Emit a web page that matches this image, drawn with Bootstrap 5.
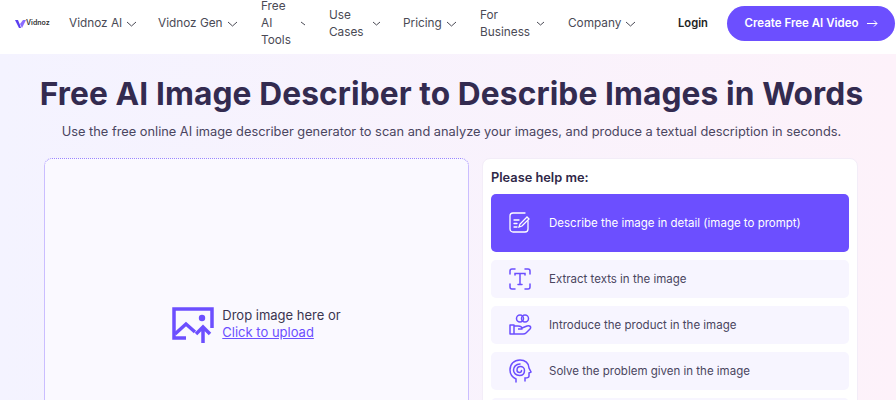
<!DOCTYPE html>
<html lang="en">
<head>
    <meta charset="UTF-8">
    <meta content="width=device-width, initial-scale=1.0" name="viewport">
    <title>AI Image Describer</title>
    <link href="https://cdn.jsdelivr.net/npm/bootstrap@5.3.0/dist/css/bootstrap.min.css" rel="stylesheet">
    <style>
        html, body { height: 400px; overflow: hidden; }
        body {
            font-family: Inter, "Liberation Sans", sans-serif;
            background: linear-gradient(90deg, #f4f3ff 0%, #fdf2fa 100%);
            color: #2f2848;
        }
        .top-bar { height: 54px; background: #fff; padding: 0 1px 7px 15px; }
        .brand-box { width: 54px; color: #6b4ffb; font-size: 7px; font-weight: 600; }
        .brand-box span { color: #333; }
        .menu-item { font-size: 11.8px; line-height: 17px; color: #4a4a55; }
        .menu-item svg { flex: none; }
        .m1 { width: 89px; }
        .m2 { width: 103px; }
        .m3 { width: 45px; }
        .m4 { width: 52px; margin-left: 23px; }
        .m5 { width: 51px; margin-left: 22px; }
        .m6 { width: 65px; margin-left: 26px; }
        .m7 { width: 69px; margin-left: 23px; }
        .login-link { font-size: 11.2px; font-weight: 600; color: #222; margin-left: 41px; }
        .video-btn {
            width: 168px; height: 35px; border-radius: 18px;
            background: #6c4fff; color: #fff; font-size: 11.5px; font-weight: 600;
        }
        .page-title { font-size: 31.7px; font-weight: 700; line-height: 40px; color: #332b50; margin: 20px 0 0; padding-left: 7px; letter-spacing: .1px; }
        .page-sub { font-size: 12.8px; line-height: 20px; color: #4a4560; margin: 8px 0 16px; padding-left: 7px; }
        .work-row { padding: 0 38px 0 44px; gap: 13px; }
        .drop-box {
            width: 425px; height: 300px; background: #faf9ff;
            border: 1px dotted #9a84ff; border-radius: 8px;
            padding-top: 148px;
        }
        .drop-text { font-size: 13px; line-height: 17px; color: #3a3550; }
        .drop-text a { color: #6c4fff; }
        .help-box {
            width: 376px; height: 300px; background: #fff;
            border: 1px solid #f3edf8; border-radius: 8px; padding: 10px 8px;
        }
        .help-title { font-size: 12.8px; font-weight: 600; line-height: 17px; margin-bottom: 8px; color: #2f2848; }
        .opt-row {
            height: 38px; margin-bottom: 8px; border-radius: 5px; background: #f7f5ff;
            color: #4a4560; font-size: 11.5px;
        }
        .opt-row.on { height: 58px; background: #6c4fff; color: #fff; margin-bottom: 8px; }
        .opt-row span { padding-top: 2px; }
        .opt-icon { width: 58px; flex: none; }
    </style>
</head>
<body>

<nav class="top-bar d-flex align-items-center">
    <div class="brand-box d-flex align-items-center">
        <svg width="11" height="10" viewBox="0 0 11 10"><path d="M0 1l3 0 2 5 1 3-2 0z" fill="#5b3ff0"/><path d="M5 5l3-4 3 0-4 8z" fill="#8a6bff"/></svg>
        <span>Vidnoz</span>
    </div>
    <div class="menu-item m1 d-flex align-items-center gap-1">Vidnoz AI
        <svg width="11" height="6" viewBox="0 0 11 6"><path d="M1 1l4.500 4 4.500-4" fill="none" stroke="#4a4a55"/></svg></div>
    <div class="menu-item m2 d-flex align-items-center gap-1">Vidnoz Gen
        <svg width="11" height="6" viewBox="0 0 11 6"><path d="M1 1l4.500 4 4.500-4" fill="none" stroke="#4a4a55"/></svg></div>
    <div class="menu-item m3 d-flex align-items-center justify-content-between">
        <span>Free<br>AI<br>Tools</span>
        <svg width="6" height="5" viewBox="0 0 6 5"><path d="M1 1l4 3" fill="none" stroke="#4a4a55"/></svg></div>
    <div class="menu-item m4 d-flex align-items-center justify-content-between">
        <span>Use<br>Cases</span>
        <svg width="9" height="5" viewBox="0 0 9 5"><path d="M1 1l3.500 3 3.500-3" fill="none" stroke="#4a4a55"/></svg></div>
    <div class="menu-item m5 d-flex align-items-center gap-1 text-nowrap">Pricing
        <svg width="11" height="6" viewBox="0 0 11 6"><path d="M1 1l4.500 4 4.500-4" fill="none" stroke="#4a4a55"/></svg></div>
    <div class="menu-item m6 d-flex align-items-center justify-content-between">
        <span>For<br>Business</span>
        <svg width="9" height="5" viewBox="0 0 9 5"><path d="M1 1l3.500 3 3.500-3" fill="none" stroke="#4a4a55"/></svg></div>
    <div class="menu-item m7 d-flex align-items-center gap-1">Company
        <svg width="11" height="6" viewBox="0 0 11 6"><path d="M1 1l4.500 4 4.500-4" fill="none" stroke="#4a4a55"/></svg></div>
    <div class="login-link">Login</div>
    <div class="video-btn ms-auto d-flex align-items-center justify-content-center gap-2">Create Free AI Video
        <svg width="11" height="9" viewBox="0 0 11 9"><path d="M0 4.500h10M7 1.500l3 3-3 3" fill="none" stroke="#fff"/></svg></div>
</nav>

<h1 class="page-title text-center">Free AI Image Describer to Describe Images in Words</h1>
<p class="page-sub text-center">Use the free online AI image describer generator to scan and analyze your images, and produce a textual description in seconds.</p>

<div class="work-row d-flex">
    <div class="drop-box d-flex justify-content-center align-items-start gap-2">
        <svg width="42" height="36" viewBox="0 0 42 36" fill="none" stroke="#6c4fff" stroke-width="3.500">
            <path d="M14 31H2V2h38v19"/>
            <path d="M3 27l11-10 9 8"/>
            <circle cx="30" cy="11" r="3.200" fill="#6c4fff" stroke="none"/>
            <path d="M31 36V20M24 27l7-7 7 7"/>
        </svg>
        <div class="drop-text">Drop image here or<br><a href="#">Click to upload</a></div>
    </div>
    <div class="help-box">
        <div class="help-title">Please help me:</div>
        <div class="opt-row on d-flex align-items-center">
            <div class="opt-icon d-flex justify-content-center">
                <svg width="22" height="22" viewBox="0 0 22 22" fill="none" stroke="#fff" stroke-width="1.300" stroke-linecap="round">
                    <path d="M19 9v8a3 3 0 0 1-3 3H4a3 3 0 0 1-3-3V4a3 3 0 0 1 3-3h12"/>
                    <path d="M5 8h5M5 11.500h3M5 15h3"/>
                    <path d="M10 15l1-3 7-7 2 2-7 7z"/>
                </svg>
            </div>
            <span>Describe the image in detail (image to prompt)</span>
        </div>
        <div class="opt-row d-flex align-items-center">
            <div class="opt-icon d-flex justify-content-center">
                <svg width="22" height="22" viewBox="0 0 22 22" fill="none" stroke="#6c4fff" stroke-width="1.500" stroke-linecap="round">
                    <path d="M1 6V3a2 2 0 0 1 2-2h3M16 1h3a2 2 0 0 1 2 2v3M21 16v3a2 2 0 0 1-2 2h-3M6 21H3a2 2 0 0 1-2-2v-3"/>
                    <path d="M6 7V5.500h10V7M11 5.500v11M9 16.500h4"/>
                </svg>
            </div>
            <span>Extract texts in the image</span>
        </div>
        <div class="opt-row d-flex align-items-center">
            <div class="opt-icon d-flex justify-content-center">
                <svg width="23" height="22" viewBox="0 0 23 22" fill="none" stroke="#6c4fff" stroke-width="1.500" stroke-linejoin="round">
                    <circle cx="11" cy="4.500" r="3.500"/>
                    <circle cx="16" cy="4.500" r="3.500"/>
                    <path d="M1 11h4v9H1zM5 12h4c2 0 4 1 4 3H9M13 14l5-2c3-1 4.500 1 3 3l-4 4c-1 1-2 1-3 1H5"/>
                </svg>
            </div>
            <span>Introduce the product in the image</span>
        </div>
        <div class="opt-row d-flex align-items-center">
            <div class="opt-icon d-flex justify-content-center">
                <svg width="23" height="24" viewBox="0 0 23 24" fill="none" stroke="#6c4fff" stroke-width="1.500" stroke-linecap="round">
                    <path d="M7 23v-3C3 18 1 15 1 11 1 5 5 1 11 1c5 0 9 3 9 8l2 4-2 1v3c0 2-2 2-4 2v3"/>
                    <path d="M11 5c-4 0-6.500 3-6.500 6 0 3 2.500 5.500 6 5.500 3 0 5-2 5-5 0-2.500-2-4-4-4-2 0-3.500 1.500-3.500 3.500 0 1.500 1 2.500 2.500 2.500 1 0 2-1 2-2"/>
                </svg>
            </div>
            <span>Solve the problem given in the image</span>
        </div>
        <div class="opt-row"></div>
    </div>
</div>

<script src="https://cdn.jsdelivr.net/npm/bootstrap@5.3.0/dist/js/bootstrap.bundle.min.js"></script>
</body>
</html>
